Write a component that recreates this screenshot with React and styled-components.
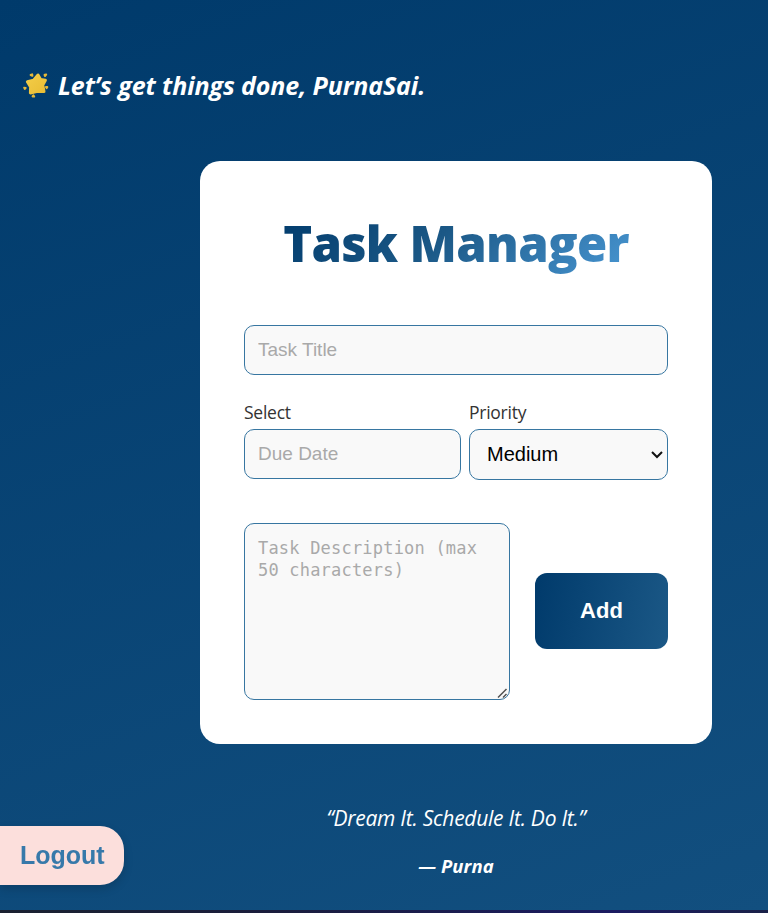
import React from 'react';
import styled, { createGlobalStyle } from 'styled-components';

const sans = '"Open Sans", "Noto Sans", sans-serif';
const arial = '"Liberation Sans", Arial, sans-serif';

const GlobalStyle = createGlobalStyle`
  *, *::before, *::after { box-sizing: border-box; }
  body { margin: 0; background: #1a1e4f; overflow: hidden; }
`;

const Page = styled.div`
  display: flex;
  flex-direction: column;
  height: 913px;
  border-bottom: 3px solid #191d4c;
  border-image: linear-gradient(90deg, #1a2130, #1a1d3c 35%, #1b1b61 80%, #1a2148) 1;
  background: linear-gradient(160deg, #003a6b 0%, #124f7f 100%);
  font-family: ${sans};
  color: #fff;
`;

const Greeting = styled.h2`
  display: flex;
  align-items: center;
  gap: 9px;
  height: 34px;
  margin: 68px 0 0 22px;
  font-size: 25px;
  line-height: 34px;
  font-weight: 700;
  font-style: italic;
  letter-spacing: -0.1px;
  white-space: nowrap;
`;

const StarIcon = styled.svg`
  width: 27px;
  height: 27px;
  flex: none;
`;

const Card = styled.main`
  display: flex;
  flex-direction: column;
  width: 512px;
  height: 583px;
  margin: 59px 0 0 200px;
  padding: 43px 44px 44px;
  border-radius: 20px;
  background: #fff;
  color: #222;
`;

const Title = styled.h1`
  align-self: center;
  margin: 0;
  height: 78px;
  line-height: 78px;
  font-size: 49px;
  font-weight: 800;
  letter-spacing: -0.7px;
  white-space: nowrap;
  background: linear-gradient(135deg, #003a6b, #1b5886 45%, #3d87c0 85%, #4a98d3);
  background-clip: text;
  -webkit-background-clip: text;
  color: transparent;
`;

const Input = styled.input`
  display: block;
  width: 100%;
  height: 50px;
  padding: 0 13px;
  border: 1px solid #3776a1;
  border-radius: 10px;
  outline: none;
  background: #f9f9f9;
  color: #000;
  font: 19px ${arial};
  &::placeholder { color: #a9a9a9; opacity: 1; }
`;

const TitleInput = styled(Input)`
  margin-top: 43px;
`;

const FieldRow = styled.div`
  display: grid;
  grid-template-columns: 217px 199px;
  gap: 8px;
  margin-top: 25px;
`;

const Label = styled.label`
  display: block;
  font-size: 17.5px;
  font-weight: 400;
  line-height: 25px;
  height: 29px;
  letter-spacing: -0.25px;
  color: #333;
`;

const ControlWrap = styled.div`
  position: relative;
`;

const Select = styled.select`
  display: block;
  appearance: none;
  width: 100%;
  height: 51px;
  padding: 0 0 2px 17px;
  border: 1px solid #3776a1;
  border-radius: 10px;
  outline: none;
  background: #f9f9f9;
  color: #000;
  font: 20px ${arial};
`;

const Chevron = styled.svg`
  position: absolute;
  right: 5px;
  top: 21px;
  width: 12px;
  height: 9px;
  pointer-events: none;
`;

const BottomRow = styled.div`
  display: flex;
  justify-content: space-between;
  align-items: flex-start;
  margin-top: 43px;
`;

const Description = styled.textarea`
  display: block;
  width: 266px;
  height: 177px;
  padding: 13px;
  border: 1px solid #3776a1;
  border-radius: 10px;
  outline: none;
  background: #f9f9f9;
  font: 17px/22px "DejaVu Sans Mono", monospace;
  letter-spacing: 0.2px;
  resize: none;
  &::placeholder { color: #a9a9a9; opacity: 1; }
`;

const ResizeGrip = styled.svg`
  position: absolute;
  right: 2px;
  bottom: 1px;
  width: 11px;
  height: 11px;
  pointer-events: none;
`;

const AddButton = styled.button`
  width: 133px;
  height: 76px;
  margin-top: 50px;
  border: 0;
  border-radius: 12px;
  background: linear-gradient(100deg, #003a6b, #1b5886);
  color: #fff;
  font: 700 22px ${arial};
`;

const Quote = styled.p`
  width: 512px;
  margin: 59px 0 0 200px;
  text-align: center;
  font-size: 21px;
  line-height: 30px;
  font-style: italic;
  letter-spacing: -0.25px;
`;

const Author = styled.p`
  width: 512px;
  margin: 19px 0 0 200px;
  text-align: center;
  font-size: 18.5px;
  line-height: 27px;
  font-weight: 700;
  font-style: italic;
  letter-spacing: 0.1px;
`;

const Logout = styled.button`
  position: fixed;
  left: 0;
  bottom: 28px;
  width: 124px;
  height: 59px;
  padding: 0;
  border: 0;
  border-radius: 0 24px 24px 0;
  background: #fcdfdc;
  box-shadow: 0 4px 10px rgba(0, 0, 0, 0.15);
  color: #3779aa;
  font: 700 25px ${arial};
  text-align: left;
  text-indent: 20px;
`;

export default function App() {
  return (
    <>
      <GlobalStyle />
      <Page>
        <Greeting>
          <StarIcon viewBox="0 0 27 27" aria-hidden="true">
            <defs>
              <linearGradient id="star" x1="0" y1="0" x2="1" y2="1">
                <stop offset="0" stopColor="#f3cd48" />
                <stop offset="1" stopColor="#e9bd35" />
              </linearGradient>
            </defs>
            <path
              d="M16 3L18.6 7.4L23.4 8.3L20.8 13L22 19.6L15.6 19.2L8.4 21L8.6 15L5.4 9.8L11.6 8.2Z"
              fill="url(#star)"
              stroke="url(#star)"
              strokeWidth="3"
              strokeLinejoin="round"
            />
            <g fill="#e5b838" stroke="#e5b838" strokeWidth="2" strokeLinejoin="round">
              <path d="M8.6 3L10.2 2.3L10.4 3.8Z" />
              <path d="M22.5 2.8L24.2 2.6L23 4Z" />
              <path d="M23.9 15L25.3 15.1L24.7 16.1Z" />
              <path d="M11.4 23.3L12.2 24.6L10.6 24.4Z" />
              <path d="M2.2 15.7L3.7 15.9L2.9 16.9Z" />
            </g>
          </StarIcon>
          <span>Let’s get things done, PurnaSai.</span>
        </Greeting>
        <Card>
          <Title>Task Manager</Title>
          <TitleInput placeholder="Task Title" />
          <FieldRow>
            <div>
              <Label htmlFor="due">Select</Label>
              <Input id="due" placeholder="Due Date" />
            </div>
            <div>
              <Label htmlFor="priority">Priority</Label>
              <ControlWrap>
                <Select id="priority" defaultValue="Medium">
                  <option>Low</option>
                  <option>Medium</option>
                  <option>High</option>
                </Select>
                <Chevron viewBox="0 0 12 9" aria-hidden="true">
                  <path d="M1 2L6 7L11 2" fill="none" stroke="#111" strokeWidth="2" />
                </Chevron>
              </ControlWrap>
            </div>
          </FieldRow>
          <BottomRow>
            <ControlWrap>
              <Description placeholder="Task Description (max 50 characters)" />
              <ResizeGrip viewBox="0 0 11 11" aria-hidden="true">
                <path d="M1 9.5L9.5 1M6 9.5L9.5 6" fill="none" stroke="#505050" strokeWidth="1.5" />
              </ResizeGrip>
            </ControlWrap>
            <AddButton>Add</AddButton>
          </BottomRow>
        </Card>
        <Quote>“Dream It. Schedule It. Do It.”</Quote>
        <Author>— Purna</Author>
      </Page>
      <Logout>Logout</Logout>
    </>
  );
}
